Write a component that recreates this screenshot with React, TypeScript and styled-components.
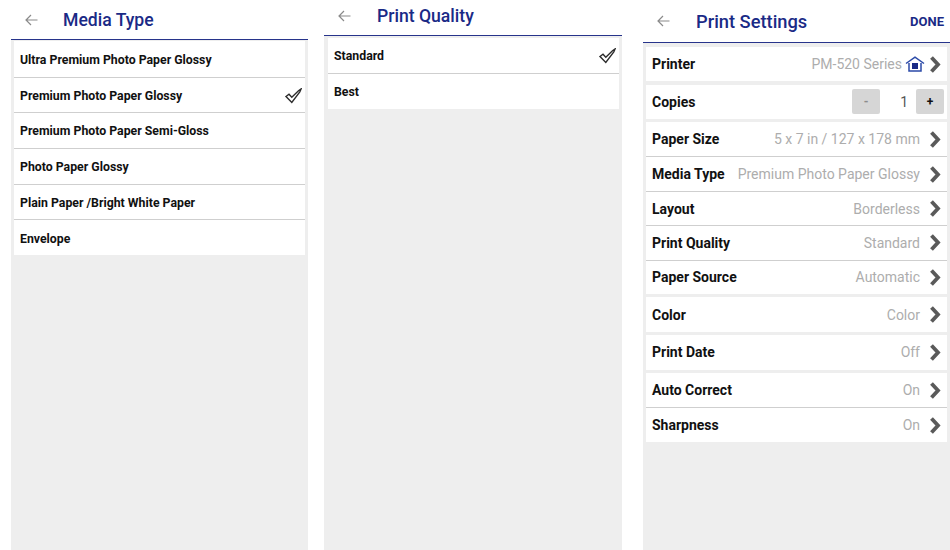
import React from "react";
import styled, { createGlobalStyle } from "styled-components";

const Global = createGlobalStyle`
  html, body { margin: 0; padding: 0; background: #fff; }
  body { font-family: Roboto, "Liberation Sans", sans-serif; }
`;

const Page = styled.div`
  display: flex;
  width: 950px;
  height: 550px;
  overflow: hidden;
  background: #fff;
  padding-left: 11px;
  box-sizing: border-box;
`;

const Screen = styled.section<{ $width: number; $gap: number }>`
  width: ${(p) => p.$width}px;
  margin-right: ${(p) => p.$gap}px;
  flex: none;
  display: flex;
  flex-direction: column;
  height: 100%;
`;

const Header = styled.header<{ $height: number; $shift?: number }>`
  height: ${(p) => p.$height}px;
  flex: none;
  box-sizing: border-box;
  display: flex;
  align-items: center;
  border-bottom: 1.5px solid #27348b;
  padding: ${(p) => Math.max(p.$shift ?? 0, 0)}px 6px ${(p) => Math.max(-(p.$shift ?? 0), 0)}px 14px;
`;

const Back = styled.svg`
  width: 13px;
  height: 12px;
  flex: none;
  color: #8a8a8a;
`;

const Title = styled.h1<{ $size: number; $indent: number }>`
  margin: 0 0 0 ${(p) => p.$indent}px;
  font-size: ${(p) => p.$size}px;
  font-weight: 500;
  color: #1a2a86;
  flex: 1;
`;

const Done = styled.span`
  font-size: 13px;
  font-weight: 700;
  color: #1a2a86;
`;

const Body = styled.div<{ $left: number; $right: number; $top: number }>`
  flex: 1;
  background: #eeeeee;
  padding: ${(p) => p.$top}px ${(p) => p.$right}px 0 ${(p) => p.$left}px;
  display: flex;
  flex-direction: column;
`;

const Group = styled.div<{ $gap?: number }>`
  display: flex;
  flex-direction: column;
  background: #fff;
  margin-bottom: ${(p) => p.$gap ?? 0}px;
  & > * + * { border-top: 1px solid #cfcfcf; }
`;

const OptionRow = styled.div<{ $height: number; $drop: number }>`
  height: ${(p) => p.$height}px;
  box-sizing: border-box;
  display: flex;
  align-items: center;
  justify-content: space-between;
  padding: ${(p) => p.$drop}px 3px 0 6px;
  font-size: 12.3px;
  font-weight: 700;
  color: #111;
`;

const SettingRow = styled.div`
  height: 34.4px;
  box-sizing: border-box;
  display: flex;
  align-items: center;
  padding: 0 6px 0 6px;
`;

const Label = styled.span`
  font-size: 14px;
  font-weight: 700;
  color: #111;
  flex: none;
`;

const Value = styled.span`
  margin-left: auto;
  font-size: 14px;
  color: #adadad;
  white-space: nowrap;
`;

const Chevron = styled.svg`
  width: 12px;
  height: 17px;
  margin-left: 9px;
  flex: none;
  color: #5a5a5a;
`;

const Stepper = styled.div`
  margin-left: auto;
  margin-right: -3px;
  display: flex;
  align-items: center;
`;

const StepButton = styled.div<{ $muted?: boolean }>`
  width: 28px;
  height: 25px;
  border-radius: 2px;
  background: #d6d6d6;
  color: ${(p) => (p.$muted ? "#8c8c8c" : "#111")};
  font-size: 12px;
  font-weight: 700;
  display: flex;
  align-items: center;
  justify-content: center;
`;

const Count = styled.span`
  width: 36px;
  padding-right: 8px;
  box-sizing: border-box;
  text-align: right;
  font-size: 14px;
  color: #555;
`;

const HomeGlyph = styled.svg`
  width: 20px;
  height: 16px;
  margin-left: 3px;
  margin-right: -5px;
  flex: none;
`;

const BackIcon = () => (
  <Back viewBox="0 0 13 12" fill="none" stroke="currentColor" strokeWidth="1.2">
    <path d="M12.5 6H1M6 1 1 6l5 5" />
  </Back>
);

const Check = () => (
  <svg width="17" height="16" viewBox="0 0 17 16" fill="none" stroke="#2b2b2b" strokeWidth="1.4">
    <path d="M1 8.5 4 6.3 6.8 9.2 13.5 2.8 16 1 14.8 3.8 6.8 14.5z" />
  </svg>
);

const ChevronIcon = () => (
  <Chevron viewBox="0 0 12 17" fill="none" stroke="currentColor" strokeWidth="3.8">
    <path d="M2.5 1.5 9 8.5l-6.5 7" />
  </Chevron>
);

const HomeIcon = () => (
  <HomeGlyph viewBox="0 0 20 16">
    <path d="M1 7.5 10 1.2 19 7.5M4 7V15h12V7" fill="none" stroke="#2b4aa8" strokeWidth="1.5" />
    <rect x="7" y="7" width="6" height="6" fill="#1a2a86" />
  </HomeGlyph>
);

type Setting = { label: string; value: string; home?: boolean };

const mediaTypes = [
  "Ultra Premium Photo Paper Glossy",
  "Premium Photo Paper Glossy",
  "Premium Photo Paper Semi-Gloss",
  "Photo Paper Glossy",
  "Plain Paper /Bright White Paper",
  "Envelope",
];

const paperGroup: Setting[] = [
  { label: "Paper Size", value: "5 x 7 in / 127 x 178 mm" },
  { label: "Media Type", value: "Premium Photo Paper Glossy" },
  { label: "Layout", value: "Borderless" },
  { label: "Print Quality", value: "Standard" },
  { label: "Paper Source", value: "Automatic" },
];

const lastGroup: Setting[] = [
  { label: "Auto Correct", value: "On" },
  { label: "Sharpness", value: "On" },
];

const SettingLine = ({ label, value, home }: Setting) => (
  <SettingRow>
    <Label>{label}</Label>
    <Value>{value}</Value>
    {home && <HomeIcon />}
    <ChevronIcon />
  </SettingRow>
);

const Options = ({
  items,
  selected,
  height,
  drop,
}: {
  items: string[];
  selected: string;
  height: number;
  drop: number;
}) => (
  <Group>
    {items.map((item) => (
      <OptionRow key={item} $height={height} $drop={drop}>
        {item}
        {item === selected && <Check />}
      </OptionRow>
    ))}
  </Group>
);

const GAP = 3.4;

export default function App() {
  return (
    <Page>
      <Global />
      <Screen $width={297} $gap={16}>
        <Header $height={39.5} $shift={1}>
          <BackIcon />
          <Title $size={17.6} $indent={25}>Media Type</Title>
        </Header>
        <Body $left={3} $right={3} $top={1.5}>
          <Options items={mediaTypes} selected="Premium Photo Paper Glossy" height={35.7} drop={1.5} />
        </Body>
      </Screen>
      <Screen $width={298} $gap={21}>
        <Header $height={35.5} $shift={-3}>
          <BackIcon />
          <Title $size={17.6} $indent={26}>Print Quality</Title>
        </Header>
        <Body $left={4} $right={3} $top={2.5}>
          <Options items={["Standard", "Best"]} selected="Standard" height={35.4} drop={0} />
        </Body>
      </Screen>
      <Screen $width={307} $gap={0}>
        <Header $height={43}>
          <BackIcon />
          <Title $size={18.3} $indent={26}>Print Settings</Title>
          <Done>DONE</Done>
        </Header>
        <Body $left={3} $right={3} $top={4}>
          <Group $gap={GAP}>
            <SettingLine label="Printer" value="PM-520 Series" home />
          </Group>
          <Group $gap={2.9}>
            <SettingRow>
              <Label>Copies</Label>
              <Stepper>
                <StepButton $muted>-</StepButton>
                <Count>1</Count>
                <StepButton>+</StepButton>
              </Stepper>
            </SettingRow>
          </Group>
          <Group $gap={GAP}>
            {paperGroup.map((s) => (
              <SettingLine key={s.label} {...s} />
            ))}
          </Group>
          <Group $gap={GAP}>
            <SettingLine label="Color" value="Color" />
          </Group>
          <Group $gap={GAP}>
            <SettingLine label="Print Date" value="Off" />
          </Group>
          <Group>
            {lastGroup.map((s) => (
              <SettingLine key={s.label} {...s} />
            ))}
          </Group>
        </Body>
      </Screen>
    </Page>
  );
}
